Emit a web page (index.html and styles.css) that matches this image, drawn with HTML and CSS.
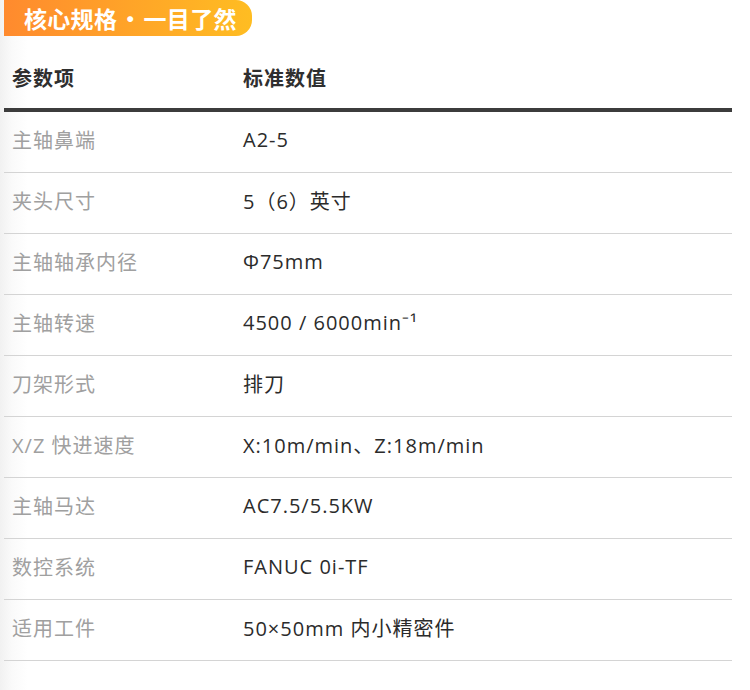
FILE: index.html
```html
<!DOCTYPE html>
<html lang="zh-CN">
<head>
<meta charset="utf-8">
<title>核心规格</title>
<link rel="stylesheet" href="styles.css">
</head>
<body>
<div class="page">
  <div class="badge">核心规格 · 一目了然</div>
  <table class="spec">
    <thead>
      <tr><th class="c1">参数项</th><th>标准数值</th></tr>
    </thead>
    <tbody>
      <tr><td class="c1">主轴鼻端</td><td>A2-5</td></tr>
      <tr><td class="c1">夹头尺寸</td><td>5（6）英寸</td></tr>
      <tr><td class="c1">主轴轴承内径</td><td>Φ75mm</td></tr>
      <tr><td class="c1">主轴转速</td><td>4500 / 6000min⁻¹</td></tr>
      <tr><td class="c1">刀架形式</td><td>排刀</td></tr>
      <tr><td class="c1">X/Z 快进速度</td><td>X:10m/min、Z:18m/min</td></tr>
      <tr><td class="c1">主轴马达</td><td>AC7.5/5.5KW</td></tr>
      <tr><td class="c1">数控系统</td><td>FANUC 0i-TF</td></tr>
      <tr><td class="c1">适用工件</td><td>50×50mm 内小精密件</td></tr>
    </tbody>
  </table>
</div>
</body>
</html>
```
FILE: styles.css
```css
html, body {
  margin: 0;
  padding: 0;
}
body {
  background: linear-gradient(to right, #f1f1f1 0, #fafafa 12px, #ffffff 28px);
  font-family: "Open Sans", "Noto Sans CJK SC", sans-serif;
  width: 750px;
  height: 690px;
  overflow: hidden;
}
.page {
  padding: 0 18px 0 4px;
}
.badge {
  display: inline-block;
  height: 36px;
  line-height: 36px;
  padding: 0 0 0 20px;
  width: 228px;
  color: #fff;
  font-family: "Noto Sans CJK SC", sans-serif;
  font-weight: 700;
  font-size: 23px;
  letter-spacing: 0.3px;
  word-spacing: -4px;
  background: linear-gradient(to right, #ff8a2e, #ffbd22);
  border-radius: 0 16px 16px 0;
  box-sizing: content-box;
}
.spec {
  width: 728px;
  border-collapse: collapse;
  background: transparent;
}
.spec th {
  text-align: left;
  font-family: "Noto Sans CJK SC", sans-serif;
  font-weight: 700;
  font-size: 20px;
  letter-spacing: 1px;
  color: #2f2f2f;
  padding: 25px 8px 14px;
  height: 33px;
  border-bottom: 4px solid #3c3c3c;
}
.spec td {
  font-size: 20px;
  letter-spacing: 1px;
  color: #2b2b2b;
  padding: 0 8px 6px;
  height: 54px;
  border-bottom: 1px solid #d4d4d4;
}
.spec .c1 {
  width: 215px;
}
.spec td.c1 {
  color: #a0a0a0;
}
```
